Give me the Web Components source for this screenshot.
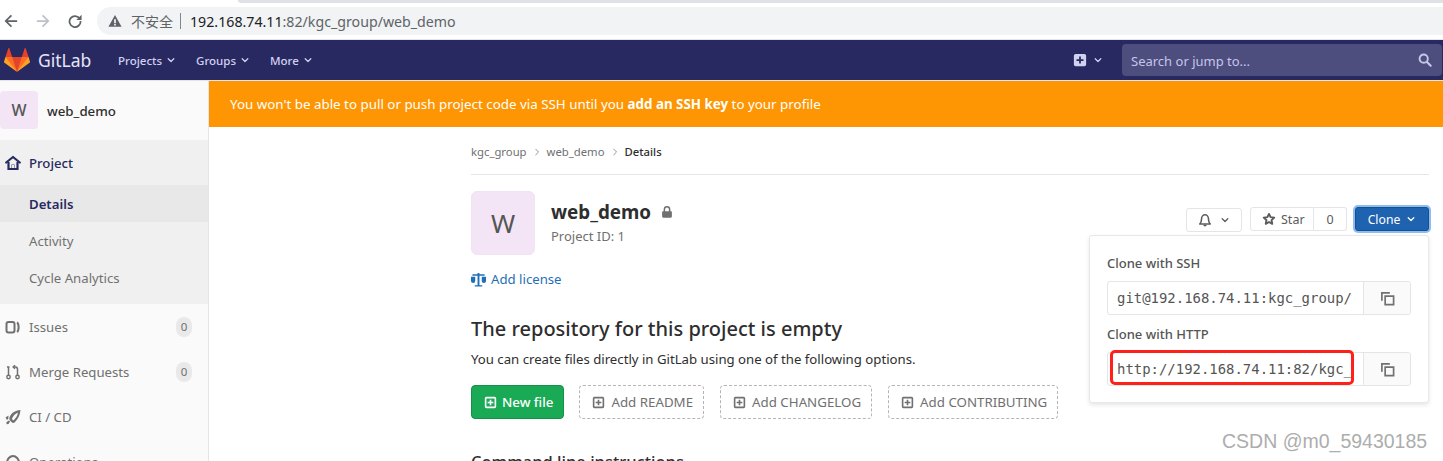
<!DOCTYPE html>
<html lang="zh">
<head>
<meta charset="utf-8">
<title>web_demo</title>
<style>
  html, body { margin: 0; height: 461px; overflow: hidden; background: #fff; }
  body { font-family: "Noto Sans", "Noto Sans CJK SC", sans-serif; font-size: 13px; color: #2e2e2e; }
  .layout { display: flex; height: 380px; }
  #mark { position: absolute; left: 1222px; top: 430px; font: 19.500px "Liberation Sans", sans-serif; color: #adadad; }
</style>
</head>
<body>
<browser-bar url-host="192.168.74.11" url-rest=":82/kgc_group/web_demo"></browser-bar>
<gl-navbar></gl-navbar>
<div class="layout">
  <gl-sidebar></gl-sidebar>
  <project-page></project-page>
</div>
<clone-panel></clone-panel>
<span id="mark">CSDN @m0_59430185</span>

<script>
const ICONS = {
  home: '<path fill="none" stroke="currentColor" stroke-width="2.200" d="M3.500 7v7h9V7"/><path fill="none" stroke="currentColor" stroke-width="2.200" stroke-linecap="round" stroke-linejoin="round" d="M1.200 7.500L8 2l6.800 5.500"/><path fill="currentColor" d="M6.500 9.500h3V15h-3z" opacity=".9"/><path fill="#f0f0f0" d="M7 10h2v3H7z"/>',
  issues: '<rect x="1.500" y="3" width="8" height="10.500" rx="2" fill="none" stroke="currentColor" stroke-width="2"/><path fill="none" stroke="currentColor" stroke-width="2" d="M12 3.500c2 1 2.300 8 0 9.500"/>',
  merge: '<circle cx="3.500" cy="13" r="1.700" fill="none" stroke="currentColor" stroke-width="1.400"/><circle cx="12.500" cy="13" r="1.700" fill="none" stroke="currentColor" stroke-width="1.400"/><path fill="none" stroke="currentColor" stroke-width="1.500" d="M3.500 11.300V3M2 3h2.500M12.500 11.300V5.500c0-1.700-1-2.500-2-2.500H8.500"/><path fill="none" stroke="currentColor" stroke-width="1.500" d="M10 1.200L8.200 3 10 4.800"/>',
  rocket: '<path fill="currentColor" fill-rule="evenodd" d="M15.500 1C10 1.500 6 4 4.500 8.500c-.4 1.300 0 2.500.8 3.300L7 13.500c1 .8 2 .5 3-.5 3.500-3.500 5-7 5.500-12zM13 3.500c-.5 3-2 5.500-4.500 8L6.800 10C8 7 10 4.800 13 3.500z"/><path fill="currentColor" d="M3.500 6.500L.5 8.500l1.500 2.500 1.300-1.300zM1.500 13l2.500-1.500 1 1L3.500 15l-2 .2z"/>',
  ops: '<path fill="none" stroke="currentColor" stroke-width="2" d="M2 9c0-4 3-7 6-7s6 3 6 7v5H2z"/>',
  plus: '<path fill="currentColor" fill-rule="evenodd" d="M3 1h10a2 2 0 0 1 2 2v10a2 2 0 0 1-2 2H3a2 2 0 0 1-2-2V3a2 2 0 0 1 2-2zm4 3v3H4v2h3v3h2V9h3V7H9V4z"/>',
  plusline: '<path fill="currentColor" fill-rule="evenodd" d="M3 1h10a2 2 0 0 1 2 2v10a2 2 0 0 1-2 2H3a2 2 0 0 1-2-2V3a2 2 0 0 1 2-2zm0 2v10h10V3zm4 1.500h2V7h2.500v2H9v2.500H7V9H4.500V7H7z"/>',
  chevron: '<path fill="none" stroke="currentColor" stroke-width="2" stroke-linecap="round" stroke-linejoin="round" d="M3.500 6L8 10.500 12.500 6"/>',
  chevright: '<path fill="none" stroke="currentColor" stroke-width="1.500" stroke-linecap="round" stroke-linejoin="round" d="M6 3.500L10.500 8 6 12.500"/>',
  search: '<circle cx="6.500" cy="6.500" r="4.700" fill="none" stroke="currentColor" stroke-width="2.200"/><path stroke="currentColor" stroke-width="2.500" stroke-linecap="round" d="M10.500 10.500l4 4"/>',
  lock: '<path fill="currentColor" d="M2.500 7h11a1 1 0 0 1 1 1v6a1.500 1.500 0 0 1-1.500 1.500H3A1.500 1.500 0 0 1 1.500 14V8a1 1 0 0 1 1-1z"/><path fill="none" stroke="currentColor" stroke-width="2" d="M4.500 8V4.500a3.500 3.500 0 0 1 7 0V8"/>',
  scale: '<path fill="currentColor" d="M7 1h2v1.500h5.500V4H9v10h3v1.500H4V14h3V4H1.500V2.500H7z"/><path fill="currentColor" d="M0 5h4.500v4.500a2.200 2.200 0 0 1-4.500 0zM11.500 5H16v4.500a2.200 2.200 0 0 1-4.500 0z"/>',
  bell: '<path fill="none" stroke="currentColor" stroke-width="1.800" stroke-linejoin="round" d="M2 12.500h12c-1.500-1.500-2-2.500-2-5.500s-2-5-4-5-4 2-4 5-.5 4-2 5.500z"/><path fill="currentColor" d="M6 13.500h4a2 2 0 0 1-4 0z"/>',
  star: '<path fill="none" stroke="currentColor" stroke-width="2.200" stroke-linejoin="round" d="M8 2.200l1.800 3.700 4.200.5-3.100 2.900.8 4.200L8 11.400l-3.700 2.100.8-4.200L2 6.400l4.200-.5z"/>',
  copy: '<path fill="none" stroke="currentColor" stroke-width="1.800" d="M5.500 5.500h9v9h-9z"/><path fill="none" stroke="currentColor" stroke-width="1.800" d="M10.500 2H2v8.500"/>',
  warn: '<path fill="currentColor" fill-rule="evenodd" d="M8 1l7.500 13.500H.5zM7 6v4.500h2V6zm0 5.500v1.500h2v-1.500z"/>',
  back: '<path fill="none" stroke="currentColor" stroke-width="2" d="M15 8H2M8.500 1.500L2 8l6.500 6.500"/>',
  forward: '<path fill="none" stroke="currentColor" stroke-width="2" d="M1 8h13M7.500 1.500L14 8l-6.500 6.500"/>',
  reload: '<path fill="none" stroke="currentColor" stroke-width="2" d="M13.500 5.500A6.300 6.300 0 1 0 14.300 8"/><path fill="currentColor" d="M9.500 6.800H15.500V.8z"/>'
};

class GlIcon extends HTMLElement {
  connectedCallback() {
    const size = this.getAttribute('size') || 16;
    this.attachShadow({ mode: 'open' }).innerHTML = `
      <style>:host { display: inline-flex; flex: none; } svg { display: block; }</style>
      <svg width="${size}" height="${size}" viewBox="0 0 16 16">${ICONS[this.getAttribute('name')]}</svg>`;
  }
}
customElements.define('gl-icon', GlIcon);

class BrowserBar extends HTMLElement {
  connectedCallback() {
    this.attachShadow({ mode: 'open' }).innerHTML = `
      <style>
        :host { display: block; height: 39px; box-sizing: border-box; padding-top: 7px; position: relative;
          font-family: "Noto Sans", "Noto Sans CJK SC", sans-serif; background: #fff; }
        .strip { position: absolute; left: 238px; right: 0; top: 0; height: 3px; background: #dee1e6; border-bottom-left-radius: 3px; }
        .row { display: flex; align-items: center; height: 28px; }
        .nav { display: flex; align-items: center; gap: 18px; width: 97px; padding-left: 4px; box-sizing: border-box; color: #5f6368; }
        .box { flex: 1; height: 28px; background: #f1f3f4; border-radius: 14px 0 0 14px; display: flex; align-items: center; padding-left: 11px; color: #5f6368; font-size: 14px; }
        .sep { width: 1px; height: 16px; background: #80868b; margin: 0 9px 0 7px; }
        .lbl { margin-left: 9px; }
        .url { font-size: 14.200px; color: #5f6368; }
        .url b { font-weight: 400; color: #202124; }
      </style>
      <div class="strip"></div>
      <div class="row">
        <div class="nav">
          <gl-icon name="back" size="14"></gl-icon>
          <gl-icon name="forward" size="14" style="color:#bdc1c6"></gl-icon>
          <gl-icon name="reload" size="14"></gl-icon>
        </div>
        <div class="box">
          <gl-icon name="warn" size="14" style="color:#5f6368"></gl-icon>
          <span class="lbl">不安全</span><span class="sep"></span>
          <span class="url"><b>${this.getAttribute('url-host')}</b>${this.getAttribute('url-rest')}</span>
        </div>
      </div>`;
  }
}
customElements.define('browser-bar', BrowserBar);

class GlNavbar extends HTMLElement {
  connectedCallback() {
    const item = (t) => `<a class="item">${t}<gl-icon name="chevron" size="10"></gl-icon></a>`;
    this.attachShadow({ mode: 'open' }).innerHTML = `
      <style>
        :host { display: flex; align-items: center; height: 42px; box-sizing: border-box; background: #292961;
          border-top: 1px solid #e4e4ee; border-bottom: 1px solid #e5e5e5; color: #d1d1f0; font-size: 11.500px; font-weight: 500; }
        .logo { display: flex; align-items: center; gap: 8px; padding-left: 4px; width: 118px; box-sizing: border-box; color: #e5e5f5; font-size: 17.500px; font-weight: 400; }
        .item { display: inline-flex; align-items: center; gap: 4px; margin-right: 20px; }
        .grow { flex: 1; }
        .new { display: flex; align-items: center; gap: 6px; margin-right: 19px; color: #d1d1f0; }
        .search { width: 320px; height: 32px; margin-right: 1px; border-radius: 4px; background: #4d4d7e; display: flex; align-items: center;
          justify-content: space-between; padding: 0 10px 0 9px; box-sizing: border-box; font-size: 13px; font-weight: 400; color: #c6c6ea; }
        .search span { padding-top: 1px; }
      </style>
      <div class="logo">
        <svg width="26" height="26" viewBox="0 0 36 36">
          <path fill="#e24329" d="M2 14l9.380 9v-9l-4-12.280c-.205-.632-1.176-.632-1.380 0z"/>
          <path fill="#e24329" d="M34 14l-9.380 9v-9l4-12.280c.205-.632 1.176-.632 1.380 0z"/>
          <path fill="#e24329" d="M18 34.380L3 14h30z"/>
          <path fill="#fc6d26" d="M18 34.380L11.380 14H2l4 11z"/>
          <path fill="#fc6d26" d="M18 34.380L24.620 14H34l-4 11z"/>
          <path fill="#fca326" d="M2 14L.1 20.160c-.18.565 0 1.200.5 1.560l17.420 12.660z"/>
          <path fill="#fca326" d="M34 14l1.900 6.160c.18.565 0 1.200-.5 1.560L18 34.380z"/>
        </svg>
        <span>GitLab</span>
      </div>
      ${item('Projects')}${item('Groups')}${item('More')}
      <div class="grow"></div>
      <div class="new"><gl-icon name="plus" size="14"></gl-icon><gl-icon name="chevron" size="10"></gl-icon></div>
      <div class="search"><span>Search or jump to...</span><gl-icon name="search" size="14"></gl-icon></div>`;
  }
}
customElements.define('gl-navbar', GlNavbar);

class SideItem extends HTMLElement {
  connectedCallback() {
    const icon = this.getAttribute('icon');
    const count = this.getAttribute('count');
    this.attachShadow({ mode: 'open' }).innerHTML = `
      <style>
        :host { display: flex; align-items: center; height: 45px; box-sizing: border-box; padding: 0 16px 0 5px; color: #707070; font-size: 13.200px; }
        :host([top]) { color: #292961; font-weight: 500; background: #f0f0f0; }
        :host([sub]) { height: 37px; padding-left: 29px; background: #f0f0f0; }
        :host([active]) { background: #e8e8e8; color: #292961; font-weight: 600; }
        .ic { width: 24px; display: flex; }
        .lbl { flex: 1; }
        .count { width: 16px; height: 20px; border-radius: 10px; background: #e9e9e9; color: #707070; font-size: 11.500px; display: flex; align-items: center; justify-content: center; }
      </style>
      ${icon ? `<span class="ic"><gl-icon name="${icon}"></gl-icon></span>` : ''}
      <span class="lbl"><slot></slot></span>
      ${count ? `<span class="count">${count}</span>` : ''}`;
  }
}
customElements.define('side-item', SideItem);

class GlSidebar extends HTMLElement {
  connectedCallback() {
    this.attachShadow({ mode: 'open' }).innerHTML = `
      <style>
        :host { display: block; width: 209px; flex: none; box-sizing: border-box; background: #fafafa; border-right: 1px solid #e5e5e5; overflow: hidden; }
        .head { display: flex; align-items: flex-start; gap: 9px; height: 49px; padding-top: 10px; font-size: 13.300px; font-weight: 500; color: #2e2e2e; }
        .ava { width: 38px; height: 38px; border-radius: 4px; background: #f3e5f5; color: #555; display: flex; align-items: center; justify-content: center; font-size: 16px; }
        .name { line-height: 40px; }
        .gap { height: 8px; background: #f0f0f0; }
      </style>
      <div class="head"><span class="ava">W</span><span class="name">web_demo</span></div>
      <side-item top icon="home">Project</side-item>
      <side-item sub active>Details</side-item>
      <side-item sub>Activity</side-item>
      <side-item sub>Cycle Analytics</side-item>
      <div class="gap"></div>
      <side-item icon="issues" count="0">Issues</side-item>
      <side-item icon="merge" count="0">Merge Requests</side-item>
      <side-item icon="rocket">CI / CD</side-item>
      <side-item icon="ops">Operations</side-item>`;
  }
}
customElements.define('gl-sidebar', GlSidebar);

class AddButton extends HTMLElement {
  connectedCallback() {
    this.attachShadow({ mode: 'open' }).innerHTML = `
      <style>
        :host { display: inline-flex; align-items: center; gap: 6px; height: 34px; box-sizing: border-box; padding: 0 10px 0 12px; border: 1px dashed #b5b5b5; border-radius: 4px; color: #707070; font-size: 13.300px; white-space: nowrap; }
        :host([primary]) { background: #1aaa55; border: 1px solid #168f48; color: #fff; font-weight: 500; gap: 5px; margin-right: -1px; }
      </style>
      <gl-icon name="plusline" size="13"></gl-icon><slot></slot>`;
  }
}
customElements.define('add-button', AddButton);

class ProjectPage extends HTMLElement {
  connectedCallback() {
    const chev = '<gl-icon name="chevright" size="10" style="color:#909090"></gl-icon>';
    this.attachShadow({ mode: 'open' }).innerHTML = `
      <style>
        :host { display: block; flex: 1; min-width: 0; }
        .banner { height: 46px; background: #fe9503; color: #fff; display: flex; align-items: center; padding-left: 21px; font-size: 13.360px; }
        .banner b { font-weight: 700; }
        .wrap { padding: 0 14px 0 262px; }
        .crumb { height: 48px; box-sizing: border-box; border-bottom: 1px solid #e5e5e5; display: flex; align-items: center; gap: 5px; font-size: 11.300px; color: #707070; padding-top: 2px; }
        .crumb b { font-weight: 500; color: #2e2e2e; }
        .head { display: flex; align-items: flex-start; margin-top: 16px; height: 64px; }
        .ava { width: 64px; height: 64px; box-sizing: border-box; border: 1px solid #f0e4f4; border-radius: 6px; background: #f3e5f5; color: #555; display: flex; align-items: center; justify-content: center; font-size: 26px; flex: none; }
        .title { margin-left: 16px; padding-top: 9px; }
        .name { display: flex; align-items: center; gap: 10px; font-size: 18.800px; font-weight: 700; color: #2e2e2e; line-height: 24px; }
        .id { font-size: 13px; color: #707070; margin-top: 3px; line-height: 18px; }
        .grow { flex: 1; }
        .acts { display: flex; align-items: flex-start; gap: 8px; margin-top: 16px; }
        .btn { display: inline-flex; align-items: center; box-sizing: border-box; height: 24px; border: 1px solid #e5e5e5; border-radius: 3px; background: #fff; color: #5c5c5c; font-size: 12.500px; }
        .bell { width: 56px; justify-content: center; gap: 8px; margin-top: 1px; }
        .pair { display: flex; }
        .star { gap: 5px; padding: 0 8px 0 11px; width: 64px; border-radius: 3px 0 0 3px; }
        .n { width: 33px; justify-content: center; border-left: 0; border-radius: 0 3px 3px 0; }
        .clone { width: 74px; height: 24px; justify-content: center; gap: 6px; background: #1f63b0; border: 1px solid #17508f; color: #fff; box-shadow: 0 0 0 2px #8cbcf0; font-size: 12.200px; border-radius: 3px; }
        .lic { display: flex; align-items: center; gap: 5px; margin-top: 14px; color: #1f6fb8; font-size: 13.200px; height: 20px; }
        h2 { margin: 27px 0 0; font-size: 20px; line-height: 26px; font-weight: 500; color: #2e2e2e; }
        p { margin: 8px 0 0; font-size: 13.200px; line-height: 18px; color: #2e2e2e; }
        .btns { display: flex; gap: 16px; margin-top: 17px; }
        h3 { margin: 32px 0 0; font-size: 16.500px; line-height: 22px; font-weight: 500; color: #2e2e2e; }
      </style>
      <div class="banner"><span>You won't be able to pull or push project code via SSH until you <b>add an SSH key</b> to your profile</span></div>
      <div class="wrap">
        <div class="crumb"><span>kgc_group</span>${chev}<span>web_demo</span>${chev}<b>Details</b></div>
        <div class="head">
          <div class="ava">W</div>
          <div class="title">
            <div class="name">web_demo <gl-icon name="lock" size="12" style="color:#707070"></gl-icon></div>
            <div class="id">Project ID: 1</div>
          </div>
          <div class="grow"></div>
          <div class="acts">
            <span class="btn bell"><gl-icon name="bell" size="14"></gl-icon><gl-icon name="chevron" size="10"></gl-icon></span>
            <div class="pair">
              <span class="btn star"><gl-icon name="star" size="14"></gl-icon>Star</span>
              <span class="btn n">0</span>
            </div>
            <span class="btn clone">Clone<gl-icon name="chevron" size="10"></gl-icon></span>
          </div>
        </div>
        <div class="lic"><gl-icon name="scale" size="15"></gl-icon>Add license</div>
        <h2>The repository for this project is empty</h2>
        <p>You can create files directly in GitLab using one of the following options.</p>
        <div class="btns">
          <add-button primary>New file</add-button>
          <add-button>Add README</add-button>
          <add-button>Add CHANGELOG</add-button>
          <add-button>Add CONTRIBUTING</add-button>
        </div>
        <h3>Command line instructions</h3>
      </div>`;
  }
}
customElements.define('project-page', ProjectPage);

class CopyField extends HTMLElement {
  connectedCallback() {
    this.attachShadow({ mode: 'open' }).innerHTML = `
      <style>
        :host { display: flex; height: 34px; box-sizing: border-box; border: 1px solid #e5e5e5; border-radius: 3px; overflow: hidden; background: #fff; }
        .val { flex: 1; min-width: 0; padding: 0 11px 0 9px; }
        .clip { overflow: hidden; white-space: nowrap; font: 13.950px/32px "DejaVu Sans Mono", monospace; color: #555; }
        .btn { width: 46px; flex: none; border-left: 1px solid #e5e5e5; background: #fafafa; display: flex; align-items: center; justify-content: center; color: #707070; }
      </style>
      <div class="val"><div class="clip"><slot></slot></div></div>
      <div class="btn"><gl-icon name="copy" size="15"></gl-icon></div>`;
  }
}
customElements.define('copy-field', CopyField);

class ClonePanel extends HTMLElement {
  connectedCallback() {
    this.attachShadow({ mode: 'open' }).innerHTML = `
      <style>
        :host { position: absolute; left: 1089px; top: 235px; width: 340px; height: 168px; box-sizing: border-box; padding: 18px 17px 0 17px; background: #fff; border: 1px solid #e8e8e8; border-radius: 3px; box-shadow: 0 2px 4px rgba(0,0,0,.1); font-size: 13px; font-weight: 500; color: #555; }
        label { display: block; line-height: 18px; margin-bottom: 9px; }
        label + copy-field { margin-bottom: 10px; }
        .red { position: absolute; left: 20px; top: 114px; width: 244px; height: 35px; box-sizing: border-box; border: 3px solid #ff2119; border-radius: 5px; }
      </style>
      <label>Clone with SSH</label>
      <copy-field>git@192.168.74.11:kgc_group/web_demo.git</copy-field>
      <label>Clone with HTTP</label>
      <copy-field>http://192.168.74.11:82/kgc_group/web_demo.git</copy-field>
      <div class="red"></div>`;
  }
}
customElements.define('clone-panel', ClonePanel);
</script>
</body>
</html>
